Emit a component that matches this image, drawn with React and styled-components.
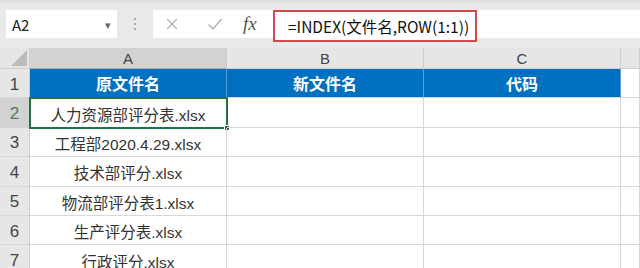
import React from 'react';
import styled, { createGlobalStyle } from 'styled-components';

const COLUMNS = ['A', 'B', 'C'];
const HEADERS = ['原文件名', '新文件名', '代码'];
const FILES = [
  '人力资源部评分表.xlsx',
  '工程部2020.4.29.xlsx',
  '技术部评分.xlsx',
  '物流部评分表1.xlsx',
  '生产评分表.xlsx',
  '行政评分.xlsx'
];

const FONT = `"Noto Sans CJK SC", "Noto Sans", sans-serif`;
const CELL_FONT = `"Liberation Sans", "Noto Sans CJK SC", sans-serif`;

const GlobalStyle = createGlobalStyle`
  * { box-sizing: border-box; }
  html, body {
    margin: 0;
    padding: 0;
    background: #ffffff;
    overflow: hidden;
    font-family: ${FONT};
  }
`;

const App = () => {
  return (
    <Page>
      <GlobalStyle />
      <Toolbar>
        <NameBox>
          <span>A2</span>
          <Caret>▾</Caret>
        </NameBox>
        <Grip>
          <Dot /><Dot /><Dot />
        </Grip>
        <FormulaBar>
          <BarIcon>
            <svg width="14" height="14" viewBox="0 0 14 14">
              <path d="M2 2 L12 12 M12 2 L2 12" stroke="#b4b4b4" strokeWidth="1.4" fill="none" />
            </svg>
          </BarIcon>
          <BarIcon>
            <svg width="16" height="14" viewBox="0 0 16 14">
              <path d="M1.5 7.5 L6 12 L14.5 2" stroke="#b4b4b4" strokeWidth="1.5" fill="none" />
            </svg>
          </BarIcon>
          <FxLabel>fx</FxLabel>
          <FormulaInput>=INDEX(文件名,ROW(1:1))</FormulaInput>
        </FormulaBar>
      </Toolbar>

      <Sheet>
        <Corner>
          <svg width="16" height="16" viewBox="0 0 16 16">
            <polygon points="16,0 16,16 0,16" fill="#bcbcbc" />
          </svg>
        </Corner>
        {COLUMNS.map(col => (
          <ColHead key={col} active={col === 'A'}>{col}</ColHead>
        ))}
        <ColHead />

        <RowHead>1</RowHead>
        {HEADERS.map(h => (
          <TitleCell key={h}>{h}</TitleCell>
        ))}
        <Cell />

        {FILES.map((name, i) => (
          <React.Fragment key={name}>
            <RowHead active={i === 0}>{i + 2}</RowHead>
            <Cell selected={i === 0}>
              {name}
              {i === 0 && <Handle />}
            </Cell>
            <Cell />
            <Cell />
            <Cell />
          </React.Fragment>
        ))}
      </Sheet>
    </Page>
  );
};

const Page = styled.div`
  width: 640px;
  height: 268px;
  overflow: hidden;
  background: #ffffff;
`;

const Toolbar = styled.div`
  height: 48px;
  display: flex;
  align-items: flex-start;
  padding: 10px 0 0 6px;
  background: linear-gradient(#dcdcdc 0px, #e9e9e9 4px, #e9e9e9 100%);
`;

const NameBox = styled.div`
  width: 111px;
  height: 28px;
  background: #ffffff;
  display: flex;
  align-items: center;
  justify-content: space-between;
  padding: 0 6px 0 6px;
  font-size: 15px;
  color: #222;
`;

const Caret = styled.span`
  font-size: 11px;
  color: #666;
`;

const Grip = styled.div`
  width: 36px;
  height: 28px;
  display: flex;
  flex-direction: column;
  align-items: center;
  justify-content: center;
  gap: 3px;
`;

const Dot = styled.span`
  width: 2px;
  height: 2px;
  background: #a8a8a8;
`;

const FormulaBar = styled.div`
  flex: 1;
  height: 28px;
  background: #ffffff;
  display: flex;
  align-items: flex-start;
  padding-left: 5px;
`;

const BarIcon = styled.div`
  width: 28px;
  height: 28px;
  margin-right: 15px;
  display: flex;
  align-items: center;
  justify-content: center;
`;

const FxLabel = styled.div`
  height: 28px;
  line-height: 28px;
  width: 30px;
  margin-left: -1px;
  font-family: "Liberation Serif", serif;
  font-style: italic;
  font-size: 19px;
  color: #555;
`;

const FormulaInput = styled.div`
  width: 204px;
  height: 32px;
  border: 2px solid #d24b4b;
  background: #ffffff;
  padding-left: 13px;
  display: flex;
  align-items: center;
  font-size: 15.5px;
  color: #111;
  white-space: nowrap;
`;

const Sheet = styled.div`
  display: grid;
  grid-template-columns: 30px 197px 197px 197px 1fr;
  grid-template-rows: 21px repeat(7, 29.4px);
`;

const Corner = styled.div`
  background: #e6e6e6;
  border-right: 1px solid #cfcfcf;
  border-bottom: 1px solid #cfcfcf;
  display: flex;
  align-items: flex-end;
  justify-content: flex-end;
  padding: 0 2px 2px 0;
`;

const ColHead = styled.div`
  background: ${p => (p.active ? '#d2d2d2' : '#e6e6e6')};
  border-right: 1px solid #cfcfcf;
  border-bottom: 1px solid ${p => (p.active ? '#a8a8a8' : '#cfcfcf')};
  display: flex;
  align-items: center;
  justify-content: center;
  font-family: "Liberation Sans", sans-serif;
  font-size: 15px;
  color: #444;
`;

const RowHead = styled.div`
  background: ${p => (p.active ? '#d2d2d2' : '#e6e6e6')};
  border-right: 1px solid #cfcfcf;
  border-bottom: 1px solid #d6d6d6;
  display: flex;
  align-items: center;
  justify-content: center;
  padding-top: 3px;
  font-family: "Liberation Sans", sans-serif;
  font-size: 17px;
  color: ${p => (p.active ? '#4b7a5e' : '#444')};
`;

const TitleCell = styled.div`
  background: #0070c0;
  border-right: 1px solid #5a9ed6;
  border-bottom: 1px solid #d4d4d4;
  display: flex;
  align-items: center;
  justify-content: center;
  font-size: 16px;
  font-weight: 700;
  color: #ffffff;
`;

const Cell = styled.div`
  position: relative;
  border-right: 1px solid #d8d8d8;
  border-bottom: 1px solid #d8d8d8;
  display: flex;
  align-items: center;
  justify-content: center;
  padding-top: 2px;
  font-family: ${CELL_FONT};
  font-size: 15.5px;
  color: #333;
  white-space: nowrap;
  outline: ${p => (p.selected ? '2px solid #217346' : 'none')};
  outline-offset: -1px;
`;

const Handle = styled.span`
  position: absolute;
  right: -4px;
  bottom: -4px;
  width: 6px;
  height: 6px;
  background: #217346;
  border: 1px solid #ffffff;
`;

export default App;
